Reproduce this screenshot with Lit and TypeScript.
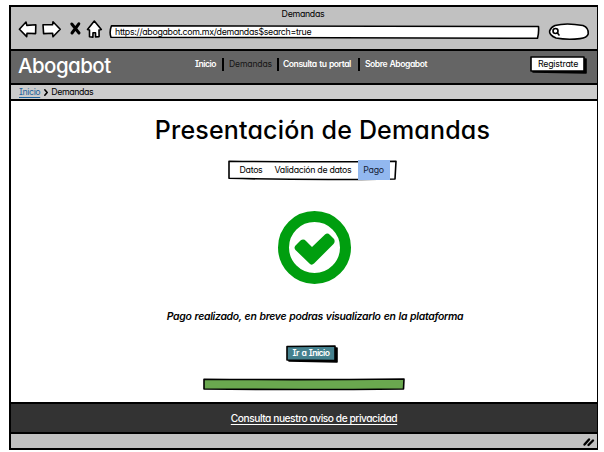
import { LitElement, html, svg, css } from "lit";
import { customElement } from "lit/decorators.js";

const icons = {
  back: svg`<path d="M.4 9.2 7 2 7.8 5.4 16.8 4.8 16.6 13.6 8 13.2 7.7 16.6Z"/>`,
  forward: svg`<path d="M19.2 9.2 12 1.8 11.5 4.8 2 4.8 2.6 13.6 11.6 13.2 12 16.8Z"/>`,
  home: svg`<path d="M8.3 1 1.5 9.4 3.5 10 3.5 16.8 6.9 17.1 7 12.8 9.5 12.8 9.6 17 13.1 16.6 13 10 15.3 9.4Z"/>`,
};

@customElement("app-root")
export class AppRoot extends LitElement {
  static styles = css`
    :host {
      display: block;
      width: 604px;
      height: 452px;
      box-sizing: border-box;
      padding: 5px 6px 2px 9px;
      background: #fff;
      overflow: hidden;
      color: #000;
      font: 8.8px/12px Inter, "Noto Sans", sans-serif;
      font-feature-settings: "cv11" 1, "cv08" 1;
      letter-spacing: -0.3px;
      white-space: nowrap;
    }
    * { box-sizing: border-box; }
    svg { display: block; flex: none; overflow: visible; fill: #fff; stroke: #000; stroke-width: 1.6; stroke-linejoin: round; stroke-linecap: round; }
    .window { height: 445px; border: 2px solid #000; border-width: 2px 1.5px 2px 2px; display: flex; flex-direction: column; }
    .chrome { height: 44px; background: #c1c1c1; border-bottom: 2px solid #000; flex: none; }
    .title { height: 12px; padding: 1px 2px 0 0; text-align: center; }
    .tools { display: flex; height: 26px; padding: 0 0 0 8px; }
    .back { margin-top: 1px; }
    .forward { margin: 1px 0 0 4px; }
    .close { margin: 3px 0 0 9px; }
    .home { margin: 1px 0 0 5px; }
    .url { position: relative; width: 430px; height: 14px; margin: 6px 0 0 7px; padding: 0 0 0 6px; line-height: 14px; }
    .frame { position: absolute; left: 0; top: 0; }
    .url span, .seg span, .register span, .go span { position: relative; }
    .search { margin: 4px 0 0 10px; }
    .header { height: 34px; flex: none; background: #656565; border-bottom: 2px solid #000; display: flex; }
    .brand { width: 184px; padding-left: 7px; font-size: 20.5px; line-height: 29px; color: #fff; font-weight: 500; letter-spacing: -0.55px; }
    .nav { display: flex; color: #fff; font-weight: 600; font-size: 8.6px; padding-top: 6px; width: 335px; letter-spacing: -0.48px; word-spacing: 0.8px; }
    .nav span { height: 15px; line-height: 14px; }
    .nav .sep { width: 1.5px; margin: 1px 0.5px 0 0; height: 13px; background: #000; }
    .nav .current { color: #151515; font-weight: 400; letter-spacing: -0.15px; }
    .register { position: relative; width: 57px; height: 18px; margin-top: 5px; text-align: center; line-height: 15px; padding-right: 1px; letter-spacing: -0.2px; }
    .crumbs { height: 16px; flex: none; background: #ccc; border-bottom: 2px solid #000; display: flex; align-items: center; padding: 0 0 0 8px; letter-spacing: -0.4px; }
    .crumbs a { color: #1d629d; text-decoration: underline; text-underline-offset: 1.5px; }
    .crumbs svg { margin: 1px 3px 0 4px; }
    .content { flex: 1; min-height: 0; display: flex; flex-direction: column; align-items: center; background: #fff; }
    h1 { margin: 11px 0 0 37px; font-size: 25px; font-weight: 450; line-height: 36px; letter-spacing: 0.18px; }
    .seg { position: relative; width: 169px; height: 20px; margin: 12px 0 0 16px; display: flex; line-height: 20px; }
    .seg .datos { margin-left: 12px; width: 35px; }
    .seg .valid { width: 83px; }
    .seg .active { width: 32px; background: #92b8ef; text-align: center; color: #152238; }
    .check { margin: 31px 0 0 21px; stroke: none; fill: #009e0f; }
    .message { margin: 24px 0 0 22px; height: 16px; line-height: 17px; font-size: 10.4px; font-weight: 600; font-style: italic; letter-spacing: -0.3px; word-spacing: 0.7px; }
    .go { position: relative; width: 52px; height: 18px; margin: 21px 0 0 16px; color: #fff; font-weight: 600; font-size: 8.6px; line-height: 17px; text-align: center; padding-right: 2px; letter-spacing: -0.55px; word-spacing: 0.9px; }
    .bar { margin: 15px 1px 0 0; }
    .footer { height: 32px; flex: none; background: #333; border: 2px solid #000; border-width: 2px 0; color: #fff; text-align: center; line-height: 29px; font-size: 10.2px; padding-left: 20px; font-weight: 500; letter-spacing: -0.45px; }
    .footer a { text-decoration: underline; text-underline-offset: 2px; text-decoration-thickness: 1px; }
    .status { height: 14px; flex: none; background: #c1c1c1; display: flex; justify-content: flex-end; padding: 3px 3px 0 0; }
  `;

  render() {
    return html`<div class="window">
      <div class="chrome">
        <div class="title"><span>Demandas</span></div>
        <div class="tools">
          <svg class="back" width="18" height="19">${icons.back}</svg>
          <svg class="forward" width="20" height="19">${icons.forward}</svg>
          <svg class="close" width="11" height="13"><path fill="none" stroke-width="3" d="M1.8 2 9 11M8.8 1.8 2 11"/></svg>
          <svg class="home" width="16" height="18">${icons.home}</svg>
          <div class="url"><svg class="frame" width="430" height="14"><path d="M2.5 .8Q200 .2 429.5 1.5Q430 8 428.5 13.3Q200 12.7 2 12.2Q0 7 2.5 .8Z"/></svg><span>https://abogabot.com.mx/demandas$search=true</span></div>
          <svg class="search" width="41" height="17"><path d="M6 2.5Q17 -.6 34 2.5Q40 5 39.2 11Q38 15 31 15.6Q18 17 7 15Q0 12 .6 8Q2 4 6 2.5Z"/><circle cx="6.5" cy="8" r="2.5"/><path d="M8.5 10 10 12"/></svg>
        </div>
      </div>
      <div class="header">
        <div class="brand">Abogabot</div>
        <div class="nav">
          <span style="width:27px">Inicio</span><span class="sep"></span>
          <span class="current" style="width:53px;padding-left:5px">Demandas</span><span class="sep"></span>
          <span style="width:79px;padding-left:4px">Consulta tu portal</span><span class="sep"></span>
          <span style="padding-left:5px">Sobre Abogabot</span>
        </div>
        <div class="register"><svg class="frame" width="57" height="18"><path fill="#000" d="M3 3 56 3 56 17 3 16Z"/><path d="M1 1 54 1 54 15 1 15Z"/></svg><span>Registrate</span></div>
      </div>
      <div class="crumbs"><a>Inicio</a><svg width="4" height="7"><path fill="none" d="M.8 .8 3.2 3.5 .8 6.2"/></svg><span>Demandas</span></div>
      <div class="content">
        <h1>Presentación de Demandas</h1>
        <div class="seg">
          <svg class="frame" width="169" height="20"><path d="M1 1.2Q90 2.3 168 1.2L167 19Q80 20.4 1 18.2Z"/></svg>
          <span class="datos">Datos</span><span class="valid">Validación de datos</span><span class="active">Pago</span>
        </div>
        <svg class="check" width="73" height="73" viewBox="0 0 73 73"><circle cx="36.5" cy="36.5" r="31" fill="none" stroke="#009e0f" stroke-width="11"/><path d="M17.5 34.5 22.5 29.5Q25.5 27.5 28 30L34 36 47 23.5Q49.5 21.5 52 24L56 28Q57.5 30.5 55.5 33L36 52.5Q34 54.5 32 53L17.5 39Q15.5 36.8 17.5 34.5Z"/></svg>
        <div class="message">Pago realizado, en breve podras visualizarlo en la plataforma</div>
        <div class="go"><svg class="frame" width="52" height="18"><path fill="#000" d="M3 3 51 3 51 17 3 16Z"/><path fill="#45818e" d="M1 1.5 49 1 49 15.5 1 15Z"/></svg><span>Ir a Inicio</span></div>
        <svg class="bar" width="202" height="12"><path fill="#6aa84f" d="M1 1.2Q100 2.2 201 1L200.5 11Q100 12 1 11Z"/></svg>
      </div>
      <div class="footer"><a>Consulta nuestro aviso de privacidad</a></div>
      <div class="status"><svg width="11" height="9"><path fill="none" stroke-width="2.4" d="M1.5 7.5 6 2.5M5.5 8 10 3.5"/></svg></div>
    </div>`;
  }
}
